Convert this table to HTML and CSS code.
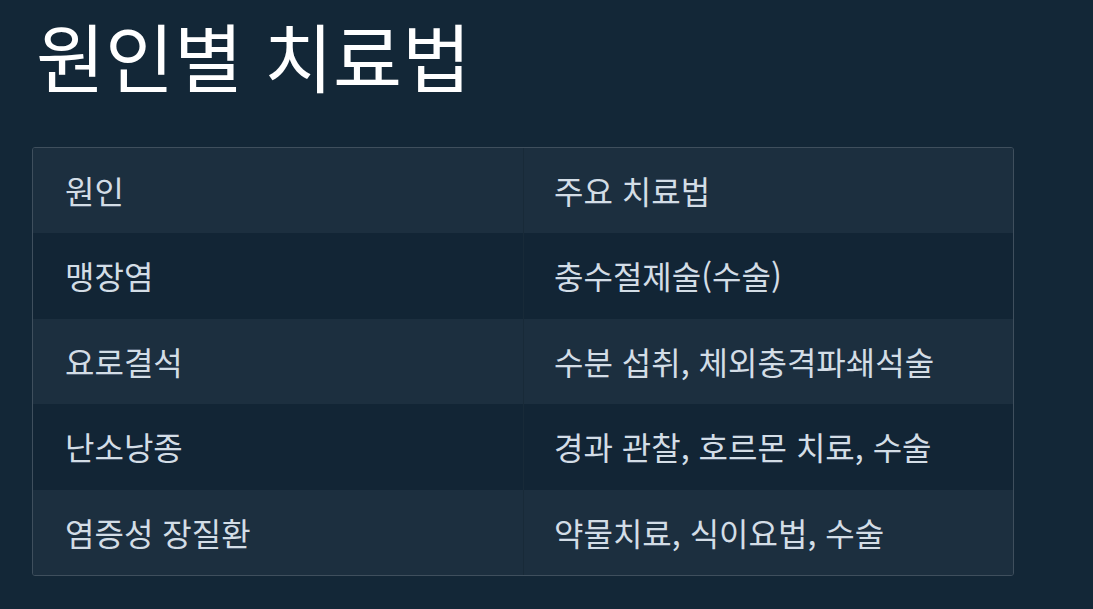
FILE: index.html
```html
<!DOCTYPE html>
<html lang="ko">
<head>
<meta charset="utf-8">
<link rel="stylesheet" href="styles.css">
</head>
<body>
<main class="page">
  <h1 class="title">원인별 치료법</h1>
  <div class="table-wrap">
    <table class="table">
      <thead>
        <tr><th>원인</th><th>주요 치료법</th></tr>
      </thead>
      <tbody>
        <tr><td>맹장염</td><td>충수절제술(수술)</td></tr>
        <tr><td>요로결석</td><td>수분 섭취, 체외충격파쇄석술</td></tr>
        <tr><td>난소낭종</td><td>경과 관찰, 호르몬 치료, 수술</td></tr>
        <tr><td>염증성 장질환</td><td>약물치료, 식이요법, 수술</td></tr>
      </tbody>
    </table>
  </div>
</main>
</body>
</html>
```
FILE: styles.css
```css
html, body {
  margin: 0;
  padding: 0;
  background: #132737;
}
body {
  font-family: "Noto Sans CJK KR", "Noto Sans", sans-serif;
  color: #d3dde6;
}
.page {
  padding: 6px 32px 32px 32px;
}
.title {
  margin: 0 0 43px 4px;
  font-size: 75px;
  font-weight: 400;
  line-height: 1.3;
  color: #ffffff;
}
.table-wrap {
  width: 980px;
  border: 1px solid #3f4f5d;
  border-radius: 3px;
  overflow: hidden;
}
.table {
  width: 100%;
  border-collapse: collapse;
  font-size: 32px;
}
.table th, .table td {
  text-align: left;
  font-weight: 400;
  padding: 0 32px;
  height: 85.5px;
  line-height: 1.4;
}
.table th:first-child, .table td:first-child {
  width: 426px;
  border-right: 1px solid #182a38;
}
.table td:last-child, .table th:last-child {
  padding-left: 30px;
}
.table thead tr { background: #1c2f3f; }
.table tbody tr:nth-child(odd) { background: #122535; }
.table tbody tr:nth-child(even) { background: #1c2f3f; }
```
